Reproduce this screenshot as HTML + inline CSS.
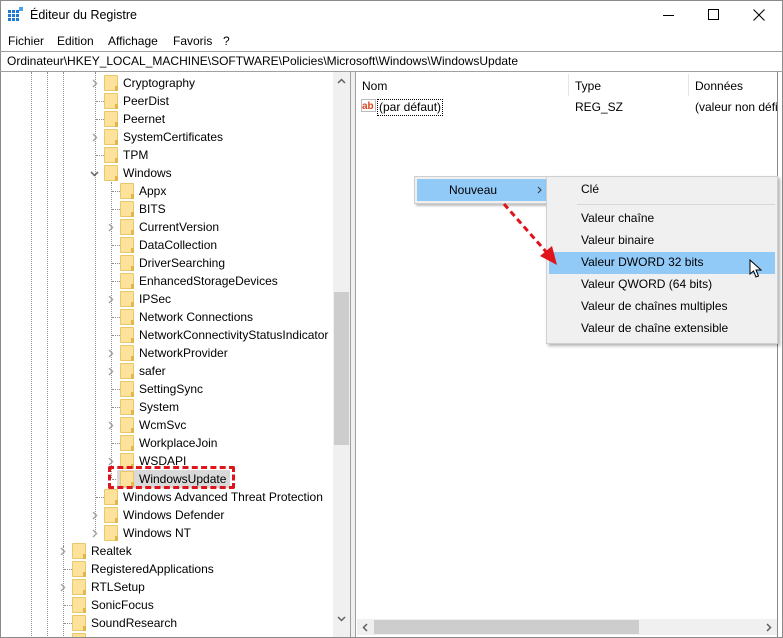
<!DOCTYPE html><html><head><meta charset="utf-8"><style>
*{margin:0;padding:0;box-sizing:border-box}
html,body{width:783px;height:638px;overflow:hidden}
body{background:#fff;font-family:"Liberation Sans",sans-serif;font-size:12px;color:#000;position:relative}
.abs{position:absolute}
.r{position:absolute;height:18px;line-height:18px;white-space:nowrap}
.f{position:absolute;top:1px;width:14px;height:16px;background:#fce29a;border:1px solid #e9c76a;border-radius:1px}
.f:after{content:"";position:absolute;right:-1px;bottom:-1px;width:3px;height:5px;background:#e3b64a}
.ch{position:absolute;top:5px;width:6px;height:9px}
.dl{position:absolute;border-left:1px dotted #909090}
.dh{position:absolute;width:8px;border-top:1px dotted #909090;top:9px}
.mi{position:absolute;left:581px;height:22px;line-height:22px}
</style></head><body>
<svg width="0" height="0" style="position:absolute"><defs><symbol id="cr" viewBox="0 0 6 9"><path d="M1 1L4.5 4.5L1 8" stroke="#a6a6a6" stroke-width="1.5" fill="none"/></symbol><symbol id="cd" viewBox="0 0 9 6"><path d="M1 1L4.5 4.5L8 1" stroke="#606060" stroke-width="1.5" fill="none"/></symbol></defs></svg>
<div class="abs" style="left:0;top:0;width:783px;height:638px;border:1px solid #8a8a8a"></div>
<!-- title -->
<svg class="abs" style="left:8px;top:7px" width="16" height="16"><g fill="#1e7ad2"><rect x="0" y="3" width="3" height="3"/><rect x="4" y="3" width="3" height="3"/><rect x="8" y="3" width="3" height="3"/><rect x="0" y="7" width="3" height="3"/><rect x="4" y="7" width="3" height="3"/><rect x="8" y="7" width="3" height="3"/><rect x="0" y="11" width="3" height="3"/><rect x="4" y="11" width="3" height="3"/><rect x="8" y="11" width="3" height="3"/></g><rect x="11" y="0" width="4" height="4" fill="#4aa3e8"/></svg>
<div class="abs" style="left:30px;top:8px;font-size:12.5px">Éditeur du Registre</div>
<div class="abs" style="left:663px;top:15px;width:11px;border-top:1px solid #000"></div>
<div class="abs" style="left:708px;top:9px;width:11px;height:11px;border:1px solid #000"></div>
<svg class="abs" style="left:753px;top:9px" width="12" height="12"><path d="M0.5 0.5L11.5 11.5M11.5 0.5L0.5 11.5" stroke="#000" stroke-width="1.1"/></svg>
<!-- menu -->
<div class="abs" style="left:8px;top:34px">Fichier</div>
<div class="abs" style="left:57px;top:34px">Edition</div>
<div class="abs" style="left:108px;top:34px">Affichage</div>
<div class="abs" style="left:173px;top:34px">Favoris</div>
<div class="abs" style="left:223px;top:34px">?</div>
<!-- address -->
<div class="abs" style="left:0;top:51px;width:783px;height:21px;border-top:1px solid #a0a0a0;border-bottom:1px solid #a0a0a0"></div>
<div class="abs" style="left:7px;top:54px">Ordinateur\HKEY_LOCAL_MACHINE\SOFTWARE\Policies\Microsoft\Windows\WindowsUpdate</div>
<!-- tree clip -->
<div class="abs" style="left:0;top:72px;width:350px;height:565px;overflow:hidden">
<div class="abs" style="left:0;top:-72px;width:350px;height:638px">
<div class="abs" style="left:333px;top:72px;width:17px;height:566px;background:#f0f0f0"></div>
<div class="abs" style="left:334px;top:292px;width:15px;height:153px;background:#cdcdcd"></div>
<svg class="abs" style="left:337px;top:78px" width="9" height="6"><path d="M1 5L4.5 1.5L8 5" stroke="#606060" stroke-width="1.5" fill="none"/></svg>
<svg class="abs" style="left:337px;top:616px" width="9" height="6"><use href="#cd"/></svg>
<div class="dl" style="left:31px;top:72px;height:566px"></div>
<div class="dl" style="left:47px;top:72px;height:566px"></div>
<div class="dl" style="left:63px;top:72px;height:474px"></div>
<div class="dl" style="left:63px;top:546px;height:92px"></div>
<div class="dl" style="left:95px;top:72px;height:460px"></div>
<div class="dl" style="left:111px;top:182px;height:296px"></div>

<div class="r" style="top:74px;left:0;width:333px"><svg class="ch" style="left:92px"><use href="#cr"/></svg><span class="f" style="left:104px"></span><span class="abs" style="left:123px">Cryptography</span></div>
<div class="r" style="top:92px;left:0;width:333px"><span class="dh" style="left:96px"></span><span class="f" style="left:104px"></span><span class="abs" style="left:123px">PeerDist</span></div>
<div class="r" style="top:110px;left:0;width:333px"><span class="dh" style="left:96px"></span><span class="f" style="left:104px"></span><span class="abs" style="left:123px">Peernet</span></div>
<div class="r" style="top:128px;left:0;width:333px"><svg class="ch" style="left:92px"><use href="#cr"/></svg><span class="f" style="left:104px"></span><span class="abs" style="left:123px">SystemCertificates</span></div>
<div class="r" style="top:146px;left:0;width:333px"><span class="dh" style="left:96px"></span><span class="f" style="left:104px"></span><span class="abs" style="left:123px">TPM</span></div>
<div class="r" style="top:164px;left:0;width:333px"><svg class="abs" style="left:90px;top:7px" width="9" height="6"><use href="#cd"/></svg><span class="f" style="left:104px"></span><span class="abs" style="left:123px">Windows</span></div>
<div class="r" style="top:182px;left:0;width:333px"><span class="dh" style="left:112px"></span><span class="f" style="left:120px"></span><span class="abs" style="left:139px">Appx</span></div>
<div class="r" style="top:200px;left:0;width:333px"><span class="dh" style="left:112px"></span><span class="f" style="left:120px"></span><span class="abs" style="left:139px">BITS</span></div>
<div class="r" style="top:218px;left:0;width:333px"><svg class="ch" style="left:108px"><use href="#cr"/></svg><span class="f" style="left:120px"></span><span class="abs" style="left:139px">CurrentVersion</span></div>
<div class="r" style="top:236px;left:0;width:333px"><span class="dh" style="left:112px"></span><span class="f" style="left:120px"></span><span class="abs" style="left:139px">DataCollection</span></div>
<div class="r" style="top:254px;left:0;width:333px"><span class="dh" style="left:112px"></span><span class="f" style="left:120px"></span><span class="abs" style="left:139px">DriverSearching</span></div>
<div class="r" style="top:272px;left:0;width:333px"><span class="dh" style="left:112px"></span><span class="f" style="left:120px"></span><span class="abs" style="left:139px">EnhancedStorageDevices</span></div>
<div class="r" style="top:290px;left:0;width:333px"><svg class="ch" style="left:108px"><use href="#cr"/></svg><span class="f" style="left:120px"></span><span class="abs" style="left:139px">IPSec</span></div>
<div class="r" style="top:308px;left:0;width:333px"><span class="dh" style="left:112px"></span><span class="f" style="left:120px"></span><span class="abs" style="left:139px">Network Connections</span></div>
<div class="r" style="top:326px;left:0;width:333px"><span class="dh" style="left:112px"></span><span class="f" style="left:120px"></span><span class="abs" style="left:139px">NetworkConnectivityStatusIndicator</span></div>
<div class="r" style="top:344px;left:0;width:333px"><svg class="ch" style="left:108px"><use href="#cr"/></svg><span class="f" style="left:120px"></span><span class="abs" style="left:139px">NetworkProvider</span></div>
<div class="r" style="top:362px;left:0;width:333px"><svg class="ch" style="left:108px"><use href="#cr"/></svg><span class="f" style="left:120px"></span><span class="abs" style="left:139px">safer</span></div>
<div class="r" style="top:380px;left:0;width:333px"><span class="dh" style="left:112px"></span><span class="f" style="left:120px"></span><span class="abs" style="left:139px">SettingSync</span></div>
<div class="r" style="top:398px;left:0;width:333px"><span class="dh" style="left:112px"></span><span class="f" style="left:120px"></span><span class="abs" style="left:139px">System</span></div>
<div class="r" style="top:416px;left:0;width:333px"><svg class="ch" style="left:108px"><use href="#cr"/></svg><span class="f" style="left:120px"></span><span class="abs" style="left:139px">WcmSvc</span></div>
<div class="r" style="top:434px;left:0;width:333px"><span class="dh" style="left:112px"></span><span class="f" style="left:120px"></span><span class="abs" style="left:139px">WorkplaceJoin</span></div>
<div class="r" style="top:452px;left:0;width:333px"><svg class="ch" style="left:108px"><use href="#cr"/></svg><span class="f" style="left:120px"></span><span class="abs" style="left:139px">WSDAPI</span></div>
<div class="r" style="top:470px;left:0;width:333px"><span class="dh" style="left:112px"></span><span class="abs" style="left:117px;top:0;width:113px;height:18px;background:#d9d9d9"></span><span class="f" style="left:120px"></span><span class="abs" style="left:139px">WindowsUpdate</span></div>
<div class="r" style="top:488px;left:0;width:333px"><span class="dh" style="left:96px"></span><span class="f" style="left:104px"></span><span class="abs" style="left:123px">Windows Advanced Threat Protection</span></div>
<div class="r" style="top:506px;left:0;width:333px"><svg class="ch" style="left:92px"><use href="#cr"/></svg><span class="f" style="left:104px"></span><span class="abs" style="left:123px">Windows Defender</span></div>
<div class="r" style="top:524px;left:0;width:333px"><svg class="ch" style="left:92px"><use href="#cr"/></svg><span class="f" style="left:104px"></span><span class="abs" style="left:123px">Windows NT</span></div>
<div class="r" style="top:542px;left:0;width:333px"><svg class="ch" style="left:60px"><use href="#cr"/></svg><span class="f" style="left:72px"></span><span class="abs" style="left:91px">Realtek</span></div>
<div class="r" style="top:560px;left:0;width:333px"><span class="dh" style="left:64px"></span><span class="f" style="left:72px"></span><span class="abs" style="left:91px">RegisteredApplications</span></div>
<div class="r" style="top:578px;left:0;width:333px"><svg class="ch" style="left:60px"><use href="#cr"/></svg><span class="f" style="left:72px"></span><span class="abs" style="left:91px">RTLSetup</span></div>
<div class="r" style="top:596px;left:0;width:333px"><span class="dh" style="left:64px"></span><span class="f" style="left:72px"></span><span class="abs" style="left:91px">SonicFocus</span></div>
<div class="r" style="top:614px;left:0;width:333px"><span class="dh" style="left:64px"></span><span class="f" style="left:72px"></span><span class="abs" style="left:91px">SoundResearch</span></div>
<div class="r" style="top:632px;left:0;width:333px"><span class="f" style="left:72px"></span></div>
<div class="abs" style="left:108px;top:466px;width:127px;height:23px;border:3px dashed #e0151b;border-radius:2px"></div>
</div></div>
<!-- splitter -->
<div class="abs" style="left:350px;top:72px;width:6px;height:565px;background:#f0f0f0;border-left:1px solid #a0a0a0;border-right:1px solid #a0a0a0"></div>

<!-- right pane -->
<div class="abs" style="left:362px;top:79px">Nom</div>
<div class="abs" style="left:568px;top:74px;height:22px;border-left:1px solid #e5e5e5"></div>
<div class="abs" style="left:575px;top:79px">Type</div>
<div class="abs" style="left:688px;top:74px;height:22px;border-left:1px solid #e5e5e5"></div>
<div class="abs" style="left:695px;top:79px">Données</div>
<svg class="abs" style="left:361px;top:99px" width="16" height="16"><rect x="0.5" y="0.5" width="14" height="12" fill="#fff" stroke="#bbb"/><text x="1" y="10" font-family="Liberation Sans" font-weight="bold" font-size="10" fill="#d9441c">ab</text></svg>
<div class="abs" style="left:377px;top:99px;border:1px dotted #000;padding:0 1px;height:17px;line-height:15px">(par défaut)</div>
<div class="abs" style="left:575px;top:100px">REG_SZ</div>
<div class="abs" style="left:695px;top:100px;white-space:nowrap">(valeur non défi</div>
<div class="abs" style="left:357px;top:619px;width:420px;height:16px;background:#f0f0f0"></div>
<div class="abs" style="left:374px;top:620px;width:265px;height:14px;background:#cdcdcd"></div>
<svg class="abs" style="left:362px;top:623px" width="6" height="9"><path d="M5 1L1.5 4.5L5 8" stroke="#606060" stroke-width="1.5" fill="none"/></svg>
<svg class="abs" style="left:766px;top:623px" width="6" height="9"><path d="M1 1L4.5 4.5L1 8" stroke="#606060" stroke-width="1.5" fill="none"/></svg>
<div class="abs" style="left:777px;top:72px;width:6px;height:566px;background:#fff;border-left:1px solid #8a8a8a;border-right:1px solid #8a8a8a"></div>
<div class="abs" style="left:0;top:637px;width:783px;height:1px;background:#8a8a8a"></div>

<!-- context menu -->
<div class="abs" style="left:414px;top:176px;width:134px;height:28px;background:#f0f0f0;border:1px solid #cfcfcf;box-shadow:2px 2px 2px rgba(0,0,0,.25)"></div>
<div class="abs" style="left:417px;top:179px;width:130px;height:22px;background:#91c9f7"></div>
<div class="abs" style="left:449px;top:183px">Nouveau</div>
<svg class="abs" style="left:537px;top:186px" width="5" height="8"><path d="M1 1L4 4L1 7" stroke="#333" stroke-width="1" fill="none"/></svg>
<div class="abs" style="left:546px;top:176px;width:232px;height:168px;background:#f0f0f0;border:1px solid #cfcfcf;box-shadow:2px 2px 3px rgba(0,0,0,.3)"></div>
<div class="abs" style="left:577px;top:204px;width:198px;border-top:1px solid #d7d7d7"></div>
<div class="abs" style="left:549px;top:252px;width:226px;height:22px;background:#91c9f7"></div>
<div class="mi" style="top:178px">Clé</div>
<div class="mi" style="top:207px">Valeur chaîne</div>
<div class="mi" style="top:229px">Valeur binaire</div>
<div class="mi" style="top:251px">Valeur DWORD 32 bits</div>
<div class="mi" style="top:273px">Valeur QWORD (64 bits)</div>
<div class="mi" style="top:295px">Valeur de chaînes multiples</div>
<div class="mi" style="top:317px">Valeur de chaîne extensible</div>
<svg class="abs" style="left:749px;top:259px" width="14" height="20"><path d="M1 1L1 15L4.5 12L7 18L9.5 17L7 11L12 11Z" fill="#fff" stroke="#000" stroke-width="1"/></svg>
<svg class="abs" style="left:498px;top:198px" width="70" height="75"><path d="M6 6L50 56" stroke="#e0151b" stroke-width="3" stroke-dasharray="6 4" fill="none"/><path d="M59 67L42 58L54 48Z" fill="#e0151b"/></svg>
</body></html>
